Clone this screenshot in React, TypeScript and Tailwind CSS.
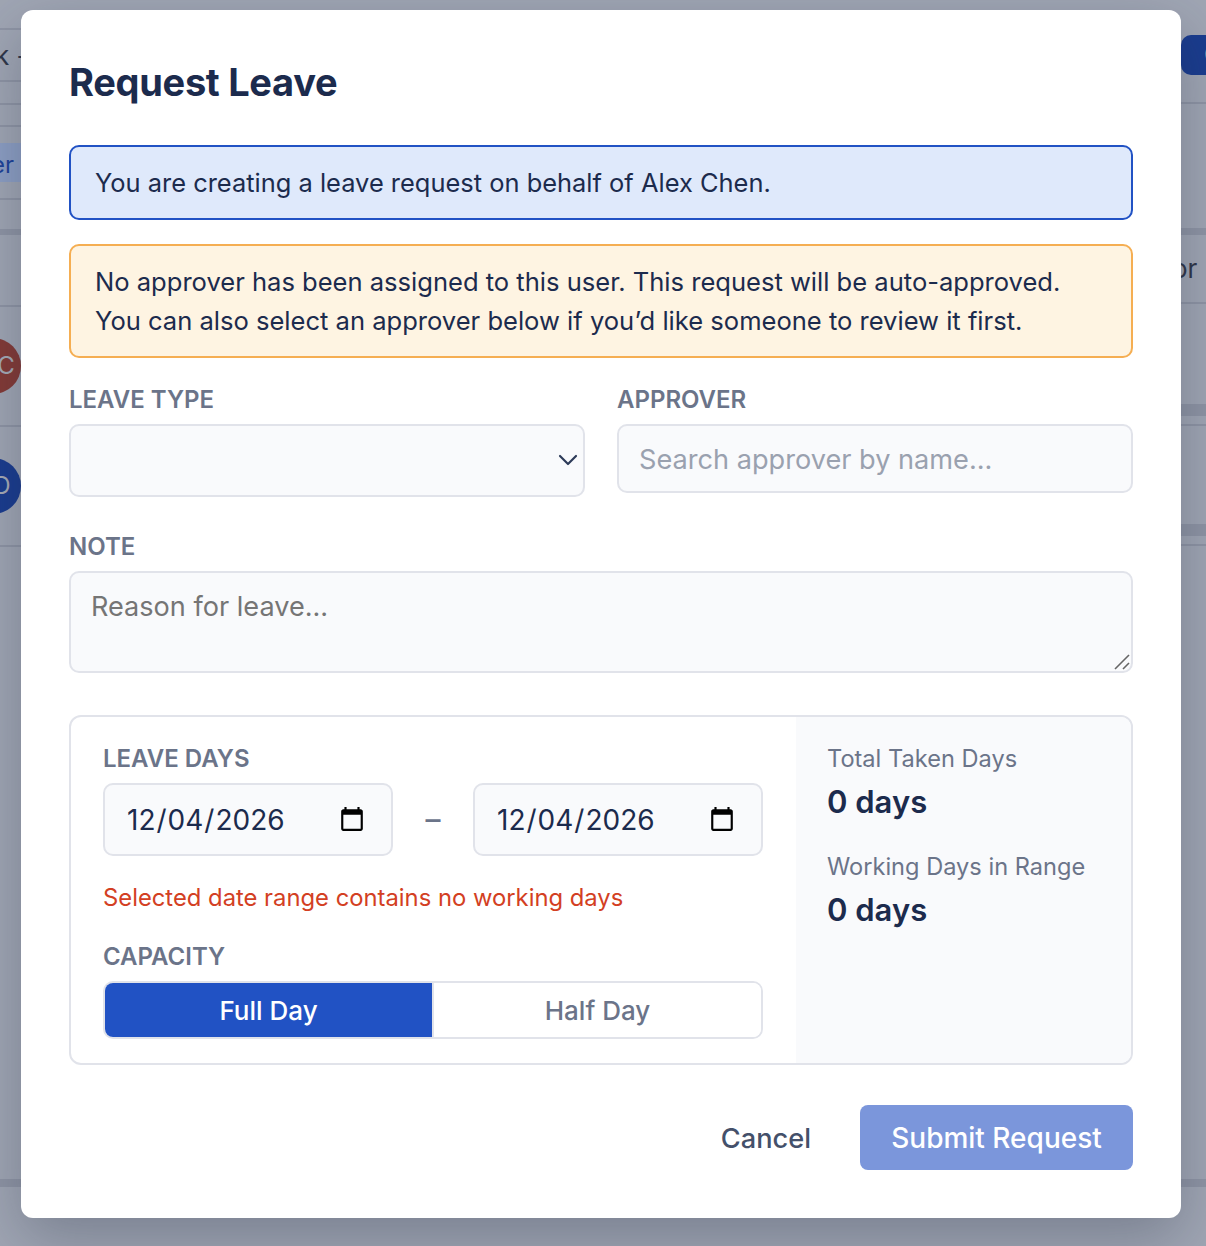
import { ChevronDown } from "lucide-react";

const font = { fontFamily: "Inter, sans-serif" };

const Label = ({ children }: { children: string }) => (
  <div className="mb-[6px] text-[24px] leading-[36px] font-semibold uppercase text-[#6b7489]">{children}</div>
);

const DateField = () => (
  <input
    type="date"
    defaultValue="2026-12-04"
    className="h-[73px] min-w-0 flex-1 rounded-[10px] border-2 border-[#e1e3ea] bg-[#f9fafc] pl-[21px] pr-[23px] pt-[1px] text-[28px] text-[#1c2b4d] outline-none"
  />
);

const Stat = ({ label, value }: { label: string; value: string }) => (
  <div className="mb-[25px]">
    <div className="text-[23.6px] leading-[36px] text-[#6b7489]">{label}</div>
    <div className="mt-[3px] text-[31px] leading-[44px] font-semibold text-[#1c2b4d]">{value}</div>
  </div>
);

export default function App() {
  return (
    <div className="relative h-[1246px] w-[1206px] overflow-hidden bg-[#a0a6b4]" style={font}>
      {/* page behind the overlay, only the edges show */}
      <div className="flex h-full justify-between">
        <div className="w-[21px] overflow-hidden">
          <div className="h-[30px] border-b-2 border-[#8f95a5]" />
          <div className="flex h-[52px] items-center border-b-2 border-[#8f95a5]">
            <span className="-ml-[5px] whitespace-nowrap text-[26px] text-[#2f3648]">k -</span>
          </div>
          <div className="h-[23px] border-b-2 border-[#8f95a5]" />
          <div className="h-[22px] border-b-2 border-[#8f95a5]" />
          <div className="flex h-[73px] items-center border-b-2 border-[#8f95a5]">
            <div className="flex h-[39px] w-full items-center overflow-hidden bg-[#8d9fc4] pt-[4px] text-[24px] text-[#1d4299]">
              <span className="-ml-[9px]">er</span>
            </div>
          </div>
          <div className="h-[35px] border-b-[6px] border-[#8f95a5]" />
          <div className="h-[72px] border-b-2 border-[#8f95a5]" />
          <div className="flex h-[120px] items-center border-b-2 border-[#8f95a5]">
            <div className="-ml-[35px] flex h-[56px] w-[56px] shrink-0 items-center justify-center rounded-full bg-[#843a36] pl-[26px] text-[24px] text-[#a6abb6]">
              C
            </div>
          </div>
          <div className="flex h-[120px] items-center border-b-2 border-[#8f95a5]">
            <div className="-ml-[35px] flex h-[56px] w-[56px] shrink-0 items-center justify-center rounded-full bg-[#1a3c8f] pl-[18px] text-[24px] text-[#a6abb6]">
              D
            </div>
          </div>
          <div className="h-[640px] border-b-[8px] border-[#8f95a5]" />
        </div>

        <div className="w-[25px] overflow-hidden">
          <div className="flex h-[104px] items-start border-b-2 border-[#8f95a5] pt-[35px]">
            <div className="flex h-[40px] w-[40px] shrink-0 items-center rounded-l-[10px] bg-[#1a3c8f] pl-[23px] text-[24px] text-[#a6abb6]">
              C
            </div>
          </div>
          <div className="h-[131px] border-b-[7px] border-[#8f95a5]" />
          <div className="flex h-[69px] items-center border-b-2 border-[#8f95a5] text-[26px] text-[#2f3648]">
            <span className="-ml-[9px]">or</span>
          </div>
          <div className="h-[112px] border-b-[12px] border-[#8f95a5]" />
          <div className="h-[10px] border-b-2 border-[#8f95a5]" />
          <div className="h-[110px] border-b-[12px] border-[#8f95a5]" />
          <div className="h-[10px] border-b-2 border-[#8f95a5]" />
          <div className="h-[641px] border-b-[8px] border-[#8f95a5]" />
        </div>
      </div>

      {/* modal */}
      <div className="absolute inset-0 flex items-start justify-center pt-[10px] pr-[4px]">
        <div className="w-[1160px] rounded-[12px] bg-white px-[48px] pt-[48px] pb-[48px] shadow-[0_20px_60px_rgba(30,41,59,0.3)]">
          <h2 className="mb-[39px] text-[38px] leading-[48px] font-bold tracking-[-0.3px] text-[#1c2b4d]">Request Leave</h2>

          <div className="mb-[24px] rounded-[10px] border-2 border-[#2152c4] bg-[#dfe9fb] px-[24px] py-[16px] text-[25.45px] leading-[39px] text-[#1c2b4d]">
            You are creating a leave request on behalf of Alex Chen.
          </div>

          <div className="mb-[24px] rounded-[10px] border-2 border-[#f5ae52] bg-[#fef4e2] px-[24px] py-[16px] text-[25.55px] leading-[39px] text-[#1c2b4d]">
            <div>No approver has been assigned to this user. This request will be auto-approved.</div>
            <div>You can also select an approver below if you’d like someone to review it first.</div>
          </div>

          <div className="mb-[32px] grid grid-cols-2 items-start gap-x-[32px]">
            <div>
              <Label>Leave Type</Label>
              <div className="relative">
                <select className="block h-[73px] w-full appearance-none rounded-[10px] border-2 border-[#e1e3ea] bg-[#f9fafc] outline-none" />
                <ChevronDown className="pointer-events-none absolute top-[20px] right-[1px] h-[32px] w-[32px] text-[#2c3a58]" strokeWidth={1.6} />
              </div>
            </div>
            <div>
              <Label>Approver</Label>
              <input
                placeholder="Search approver by name..."
                className="block h-[69px] w-full rounded-[10px] border-2 border-[#e1e3ea] bg-[#f9fafc] px-[20px] pt-[1px] text-[27.15px] outline-none placeholder:text-[#9aa1af]"
              />
            </div>
          </div>

          <div className="mb-[42px]">
            <Label>Note</Label>
            <div className="relative">
              <textarea
                placeholder="Reason for leave..."
                className="block h-[102px] w-full resize-none rounded-[10px] border-2 border-[#e1e3ea] bg-[#f9fafc] px-[20px] py-[14px] text-[27.1px] outline-none placeholder:text-[#757575]"
              />
              {/* resize grip */}
              <svg className="pointer-events-none absolute right-[2px] bottom-[2px] h-[18px] w-[18px]" viewBox="0 0 18 18" fill="none" stroke="#666666" strokeWidth="1.6">
                <path d="M2 16 L16 2" />
                <path d="M10 16 L16 10" />
              </svg>
            </div>
          </div>

          <div className="mb-[40px] flex h-[350px] overflow-hidden rounded-[12px] border-2 border-[#e1e3ea]">
            <div className="w-[725px] shrink-0 pt-[24px] pr-[33px] pl-[32px]">
              <Label>Leave Days</Label>
              <div className="flex items-center">
                <DateField />
                <div className="w-[80px] text-center text-[30px] font-medium text-[#6b7489]">–</div>
                <DateField />
              </div>
              <div className="mt-[24px] mb-[23px] text-[23.8px] leading-[36px] text-[#d33f23]">
                Selected date range contains no working days
              </div>
              <Label>Capacity</Label>
              <div className="flex h-[58px] overflow-hidden rounded-[10px] border-2 border-[#e1e3ea]">
                <button className="w-[327px] bg-[#2152c4] text-[26px] font-medium text-white">Full Day</button>
                <button className="flex-1 border-l-2 border-[#e1e3ea] bg-white text-[26px] font-medium text-[#6b7489]">Half Day</button>
              </div>
            </div>
            <div className="flex-1 bg-[#f9fafc] pt-[24px] pl-[31px]">
              <Stat label="Total Taken Days" value="0 days" />
              <Stat label="Working Days in Range" value="0 days" />
            </div>
          </div>

          <div className="flex items-center justify-end">
            <button className="mt-[3px] mr-[49px] text-[27.2px] font-medium text-[#44506a]">Cancel</button>
            <button className="h-[65px] w-[273px] rounded-[8px] bg-[#7b96db] text-[28px] font-medium text-white">Submit Request</button>
          </div>
        </div>
      </div>
    </div>
  );
}
